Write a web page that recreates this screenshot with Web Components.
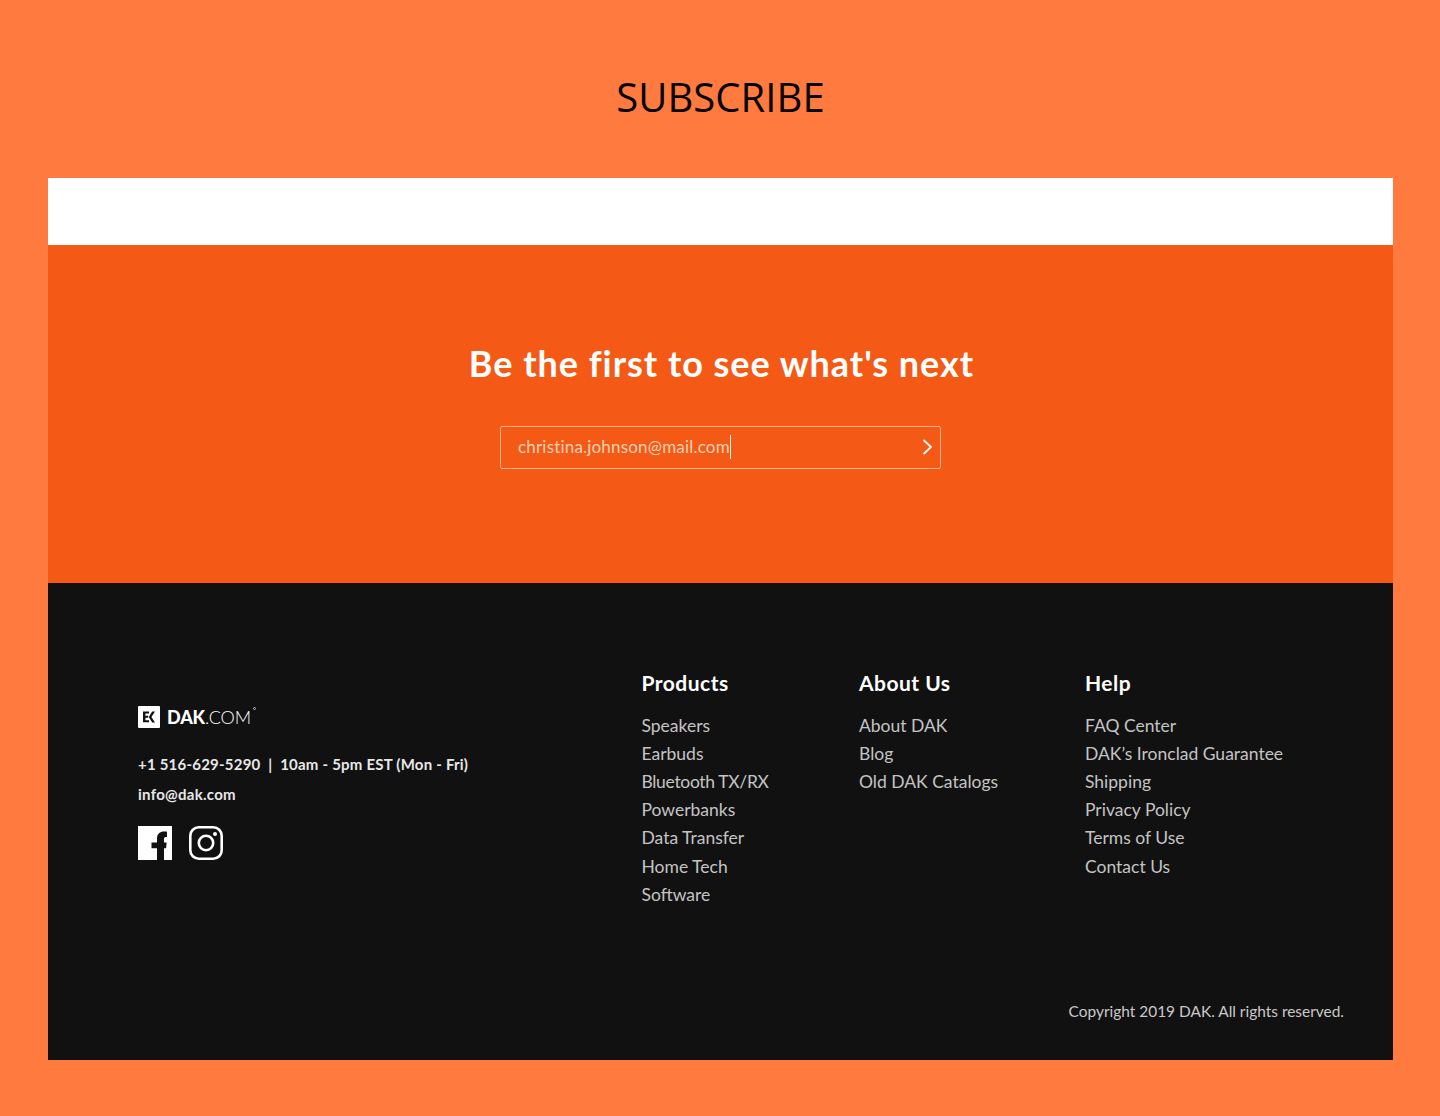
<!DOCTYPE html>
<html>
<head>
<meta charset="utf-8">
<title>Subscribe</title>
<style>
  html, body { margin: 0; background: #ff7a3f; }
  body { font-family: "Lato", "Liberation Sans", sans-serif; }
</style>
</head>
<body>
<subscribe-page>
  <subscribe-box slot="box"></subscribe-box>
  <site-footer slot="footer">
    <contact-block slot="contact"></contact-block>
    <link-list slot="links" heading="Products" width="217.5" items="Speakers|Earbuds|Bluetooth TX/RX|Powerbanks|Data Transfer|Home Tech|Software"></link-list>
    <link-list slot="links" heading="About Us" width="226" items="About DAK|Blog|Old DAK Catalogs"></link-list>
    <link-list slot="links" heading="Help" width="240" items="FAQ Center|DAK’s Ironclad Guarantee|Shipping|Privacy Policy|Terms of Use|Contact Us"></link-list>
  </site-footer>
</subscribe-page>

<script>
// Pagina: titol i targeta
class SubscribePage extends HTMLElement {
  constructor() {
    super();
    this.attachShadow({ mode: 'open' });
    this.shadowRoot.innerHTML = `
      <style>
        :host { display: block; height: 1116px; padding: 0 47px 0 48px; box-sizing: border-box; overflow: hidden; }
        h1 { margin: 0; padding-top: 70px; height: 178px; box-sizing: border-box; text-align: center;
             font: 400 40px/54px "Open Sans", sans-serif; color: #050505; letter-spacing: 0.05px; }
        .white { height: 67px; background: #fff; }
      </style>
      <h1>SUBSCRIBE</h1>
      <div class="white"></div>
      <slot name="box"></slot>
      <slot name="footer"></slot>
    `;
  }
}

// Bloc taronja amb el formulari
class SubscribeBox extends HTMLElement {
  constructor() {
    super();
    this.attachShadow({ mode: 'open' });
    this.shadowRoot.innerHTML = `
      <style>
        :host { display: block; height: 338px; background: #f45a15; color: #fff; box-sizing: border-box; padding-top: 95px; }
        h2 { margin: 0; padding-left: 2px; height: 46px; text-align: center; font: 700 36px/46px "Lato", sans-serif; letter-spacing: 0.97px; }
        .field { display: flex; align-items: center; justify-content: space-between; box-sizing: border-box;
                 width: 441px; height: 43px; margin: 40px 0 0 452px; padding: 0 7px 2px 17px;
                 border: 1px solid #fbb48e; border-radius: 2px; }
        .value { font: 400 17px/24px "Lato", sans-serif; color: #fdd0b5; letter-spacing: 0.19px; border-right: 1px solid #fff; }
        svg { display: block; }
      </style>
      <h2>Be the first to see what's next</h2>
      <div class="field">
        <span class="value">christina.johnson@mail.com</span>
        <svg width="12" height="16" viewBox="0 0 12 16" fill="none" stroke="#fff" stroke-width="1.8"><path d="M2.500 1l7.500 7-7.500 7"/></svg>
      </div>
    `;
  }
}

// Peu negre
class SiteFooter extends HTMLElement {
  constructor() {
    super();
    this.attachShadow({ mode: 'open' });
    this.shadowRoot.innerHTML = `
      <style>
        :host { display: block; height: 477px; background: #111; box-sizing: border-box; padding: 86px 49px 0 90px; }
        .row { display: flex; height: 331px; }
        .contact { display: block; flex: none; width: 503.5px; padding-top: 37px; }
        .copy { text-align: right; font: 400 15.45px/22px "Lato", sans-serif; color: #c9c9c9; }
      </style>
      <div class="row">
        <div class="contact"><slot name="contact"></slot></div>
        <slot name="links"></slot>
      </div>
      <div class="copy">Copyright 2019 DAK. All rights reserved.</div>
    `;
  }
}

// Logo, telefon i xarxes
class ContactBlock extends HTMLElement {
  constructor() {
    super();
    this.attachShadow({ mode: 'open' });
    this.shadowRoot.innerHTML = `
      <style>
        :host { display: block; color: #e8e8e8; font: 700 15px/20px "Lato", sans-serif; }
        .logo { display: flex; align-items: flex-start; height: 24px; color: #fff; }
        .mark { display: block; margin-right: 7px; }
        .word { font: 900 18px/22px "Lato", sans-serif; letter-spacing: -0.15px; }
        .word span { font-weight: 300; letter-spacing: -0.05px; }
        .reg { width: 3px; height: 3px; border: 0.5px solid #bbb; border-radius: 50%; margin: 1px 0 0 2px; box-sizing: border-box; }
        .phone { margin-top: 24px; letter-spacing: 0.22px; }
        .mail { margin-top: 10px; letter-spacing: 0.28px; }
        .social { display: flex; gap: 17px; margin-top: 22px; }
        svg { display: block; }
      </style>
      <div class="logo">
        <svg class="mark" width="22" height="22" viewBox="0 0 22 22">
          <rect width="22" height="22" rx="1" fill="#fff"/>
          <path d="M5 5.500h6v1.900H7.400v2.400h2.800v1.900H7.400v2.600H11v1.900H5z" fill="#111"/>
          <path d="M17 5.500l-3.600 5.500 3.600 5.500h-2.800L10.800 11l3.400-5.500z" fill="#111"/>
        </svg>
        <span class="word">DAK<span>.COM</span></span>
        <i class="reg"></i>
      </div>
      <div class="phone">+1 516-629-5290 &nbsp;|&nbsp; 10am - 5pm EST (Mon - Fri)</div>
      <div class="mail">info@dak.com</div>
      <div class="social">
        <svg width="34" height="34" viewBox="0 0 34 34">
          <path fill="#fff" d="M0 0h34v34H26V22.200h2.100l.5-5.600H26v-3.400c0-1.500.4-2.300 2.200-2.300h.8V5.800c-.5-.1-1.500-.2-3-.2-4 0-7 2.400-7 6.800v4.200h-5.500v5.600H19V34H0z"/>
        </svg>
        <svg width="34" height="34" viewBox="0 0 34 34" fill="none" stroke="#fff" stroke-width="2.600">
          <rect x="1.300" y="1.300" width="31.400" height="31.400" rx="8.500"/>
          <circle cx="17" cy="17" r="7.200"/>
          <circle cx="26" cy="8" r="2" fill="#fff" stroke="none"/>
        </svg>
      </div>
    `;
  }
}

// Columna d'enllacos: llegeix heading, width i items dels atributs
class LinkList extends HTMLElement {
  constructor() {
    super();
    this.attachShadow({ mode: 'open' });
  }

  connectedCallback() {
    const items = (this.getAttribute('items') || '').split('|');
    this.shadowRoot.innerHTML = `
      <style>
        :host { display: block; width: ${this.getAttribute('width')}px; flex: none; }
        h3 { margin: 0 0 14.6px; font: 700 21px/28px "Lato", sans-serif; color: #fff; letter-spacing: 0.48px; }
        ul { list-style: none; margin: 0; padding: 0; }
        li { font: 400 17.5px/28.2px "Lato", sans-serif; color: #c4c4c4; white-space: nowrap; }
        li.tight { letter-spacing: -0.33px; }
      </style>
      <h3>${this.getAttribute('heading')}</h3>
      <ul>${items.map(i => `<li${i.includes('/') ? ' class="tight"' : ''}>${i}</li>`).join('')}</ul>
    `;
  }
}

customElements.define('subscribe-page', SubscribePage);
customElements.define('subscribe-box', SubscribeBox);
customElements.define('site-footer', SiteFooter);
customElements.define('contact-block', ContactBlock);
customElements.define('link-list', LinkList);
</script>
</body>
</html>
